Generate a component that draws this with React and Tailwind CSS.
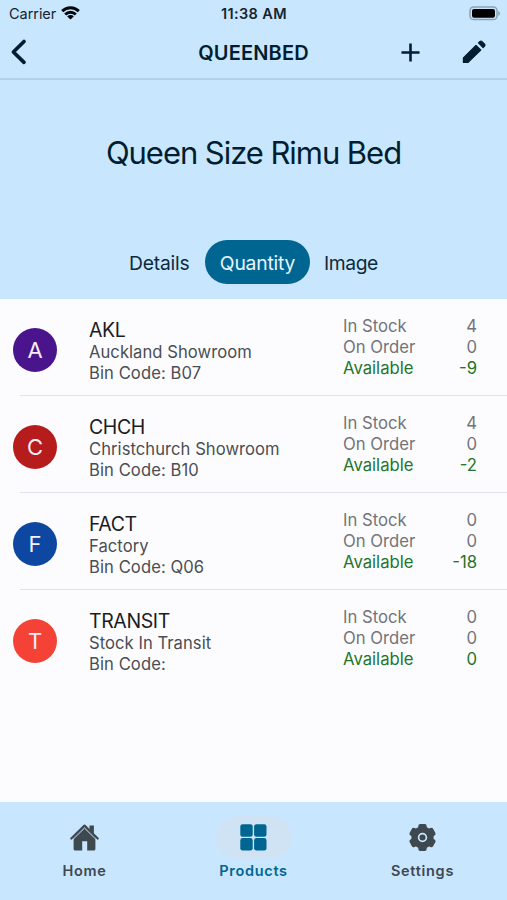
import { MdAdd } from "react-icons/md";

const locations = [
  { code: "AKL", name: "Auckland Showroom", bin: "B07", stock: 4, order: 0, available: -9, color: "bg-[#4a148c]" },
  { code: "CHCH", name: "Christchurch Showroom", bin: "B10", stock: 4, order: 0, available: -2, color: "bg-[#b71c1c]" },
  { code: "FACT", name: "Factory", bin: "Q06", stock: 0, order: 0, available: -18, color: "bg-[#0d47a1]" },
  { code: "TRANSIT", name: "Stock In Transit", bin: "", stock: 0, order: 0, available: 0, color: "bg-[#f44336]" },
];

function PencilIcon() {
  return (
    <svg width="24" height="24" viewBox="0 0 24 24" fill="currentColor" stroke="currentColor" strokeWidth="1.2" strokeLinejoin="round">
      <path d="M1.400 22.400v-4.500L14 5.300l4.700 4.700L6.100 22.400Z" />
      <path d="m16.500 2.900 1.500-1.500q.9-.7 1.800 0l2.800 2.800q.7.900 0 1.800l-1.500 1.500Z" />
    </svg>
  );
}

function HomeIcon() {
  return (
    <svg width="29" height="29" viewBox="0 0 29 29" fill="currentColor">
      <path d="M14.500 4.600 25.400 15V26a1.600 1.600 0 0 1-1.600 1.600H17.200v-9.400h-5v9.400H5.200A1.600 1.600 0 0 1 3.600 26V15Z" />
      <path d="M19.500 2.400h4.400v8.500l-4.400-4Z" />
      <path d="M1.300 15.500 14.500 2.600l13.200 12.900" fill="none" stroke="currentColor" strokeWidth="2.200" strokeLinecap="round" strokeLinejoin="round" />
      <path d="M3.200 16.300 14.500 5.200l11.300 11.100" fill="none" stroke="#c9e6ff" strokeWidth="0.800" />
    </svg>
  );
}

function GridIcon() {
  return (
    <svg width="29" height="29" viewBox="0 0 29 29" fill="currentColor">
      <rect x="1.300" y="1.300" width="12.400" height="12.400" rx="2.300" />
      <rect x="15.100" y="1.300" width="12.400" height="12.400" rx="2.300" />
      <rect x="1.300" y="15.100" width="12.400" height="12.400" rx="2.300" />
      <rect x="15.100" y="15.100" width="12.400" height="12.400" rx="2.300" />
    </svg>
  );
}

function GearIcon() {
  return (
    <svg width="29" height="29" viewBox="0 0 29 29" fill="currentColor">
      <circle cx="14.500" cy="14.500" r="11.100" />
      <rect x="10.300" y="1" width="8.400" height="27" rx="2" />
      <rect x="10.300" y="1" width="8.400" height="27" rx="2" transform="rotate(60 14.500 14.500)" />
      <rect x="10.300" y="1" width="8.400" height="27" rx="2" transform="rotate(120 14.500 14.500)" />
      <circle cx="14.500" cy="14.500" r="3.900" fill="none" stroke="#c9e6ff" strokeWidth="1.700" />
    </svg>
  );
}

function StatusBar() {
  return (
    <div className="grid h-[27px] shrink-0 grid-cols-3 items-center pl-[9px] pr-[6px] text-[14.5px] text-[#142430]">
      <div className="flex items-center gap-[5px]">
        <span className="tracking-[-0.05px]">Carrier</span>
        <svg width="19" height="14" viewBox="0 0 19 14" className="-mt-[2px]" fill="none" stroke="#02070a" strokeWidth="2.9">
          <path d="M1.2 5.1a11.8 11.8 0 0 1 16.6 0M4.2 8.5a7.5 7.5 0 0 1 10.6 0" />
          <path d="M9.5 13.6 6.2 10.5a4.6 4.6 0 0 1 6.6 0Z" fill="#02070a" stroke="none" />
        </svg>
      </div>
      <span className="-ml-[2px] text-center font-semibold tracking-[0.35px]">11:38 AM</span>
      <svg className="-mt-[1px] justify-self-end" width="32" height="15" viewBox="0 0 32 15">
        <rect x="1" y="1" width="27" height="12.6" rx="3.6" fill="none" stroke="#8ba2b3" strokeWidth="1.5" />
        <rect x="3" y="3" width="23" height="8.8" rx="2" fill="#000" />
        <path d="M29.2 5v5q1.8-.7 1.8-2.5T29.2 5Z" fill="#8ba2b3" />
      </svg>
    </div>
  );
}

function NavBar() {
  return (
    <div className="grid h-[53px] shrink-0 grid-cols-[150px_1fr_150px] items-center border-b-2 border-[#b4d0e6] text-[#001e2f]">
      <svg className="-mt-[1px] ml-[9px]" width="18" height="28" viewBox="0 0 18 28" fill="none" stroke="currentColor" strokeWidth="3.7" strokeLinecap="round" strokeLinejoin="round">
        <path d="M15 3.500 4.400 14 15 24.300" />
      </svg>
      <h1 className="text-center text-[20px] font-semibold tracking-[0.15px]">QUEENBED</h1>
      <div className="-mt-[1px] flex items-center justify-end gap-[36px] pr-[21px]">
        <MdAdd size={31} />
        <PencilIcon />
      </div>
    </div>
  );
}

function Row({ item, last }) {
  return (
    <div className="flex h-[97px] items-stretch">
      <div className="flex w-[20px] items-center pl-[13px] pt-[5px]">
        <div className={`z-10 flex size-[44px] shrink-0 items-center justify-center rounded-full text-[22px] text-[#f6eefa] ${item.color}`}>{item.code[0]}</div>
      </div>
      <div className={`flex flex-1 pl-[69px] pr-[30px] ${last ? "" : "border-b border-[#e1e3e8]"}`}>
        <div className="w-[254px] pt-[20px] text-[16.6px] leading-[21px] text-[#4a4e52]">
          <div className="text-[19.5px] leading-[23px] tracking-[-0.4px] text-[#1b1c1f]">{item.code}</div>
          <div className="tracking-[0.05px]">{item.name}</div>
          <div className="tracking-[0.08px]">Bin Code: {item.bin}</div>
        </div>
        <div className="flex-1 pt-[17px] text-[16.7px] leading-[21px] text-[#737477]">
          <div className="flex justify-between"><span>In Stock</span><span>{item.stock}</span></div>
          <div className="flex justify-between"><span>On Order</span><span>{item.order}</span></div>
          <div className="flex justify-between text-[#22752a]"><span>Available</span><span>{item.available}</span></div>
        </div>
      </div>
    </div>
  );
}

function Tab({ icon: Icon, label, active }) {
  return (
    <div className={`flex flex-col items-center pt-[14px] ${active ? "text-[#006591]" : "text-[#3e484f]"}`}>
      <div className={`flex h-[43px] w-[76px] items-center justify-center rounded-full ${active ? "bg-[#cfe3f5]" : ""}`}>
        <Icon />
      </div>
      <span className="mt-[2px] text-[14.5px] font-semibold leading-[20px] tracking-[0.7px]">{label}</span>
    </div>
  );
}

export default function App() {
  return (
    <div className="flex h-[900px] w-[507px] flex-col overflow-hidden bg-[#fcfcff] font-['Inter','Liberation_Sans',sans-serif]">
      <header className="flex h-[299px] shrink-0 flex-col bg-[#c9e6ff]">
        <StatusBar />
        <NavBar />
        <h2 className="mt-[53px] text-center text-[31px] leading-[40px] tracking-[-1.05px] text-[#001e2f]">Queen Size Rimu Bed</h2>
        <div className="mt-[67px] flex h-[44px] items-center pl-[129px] text-[19.3px] text-[#0d2a3c]">
          <span className="w-[76px] pt-[2px] tracking-[-0.2px]">Details</span>
          <span className="flex h-[44px] w-[105px] items-center justify-center rounded-full bg-[#006591] pt-[2px] tracking-[-0.2px] text-[#e8f5ff]">Quantity</span>
          <span className="pl-[14px] pt-[2px] tracking-[-0.4px]">Image</span>
        </div>
      </header>
      <main className="flex-1">
        {locations.map((item, i) => <Row key={item.code} item={item} last={i === locations.length - 1} />)}
      </main>
      <nav className="grid h-[98px] shrink-0 grid-cols-3 bg-[#c9e6ff]">
        <Tab icon={HomeIcon} label="Home" />
        <Tab icon={GridIcon} label="Products" active />
        <Tab icon={GearIcon} label="Settings" />
      </nav>
    </div>
  );
}
